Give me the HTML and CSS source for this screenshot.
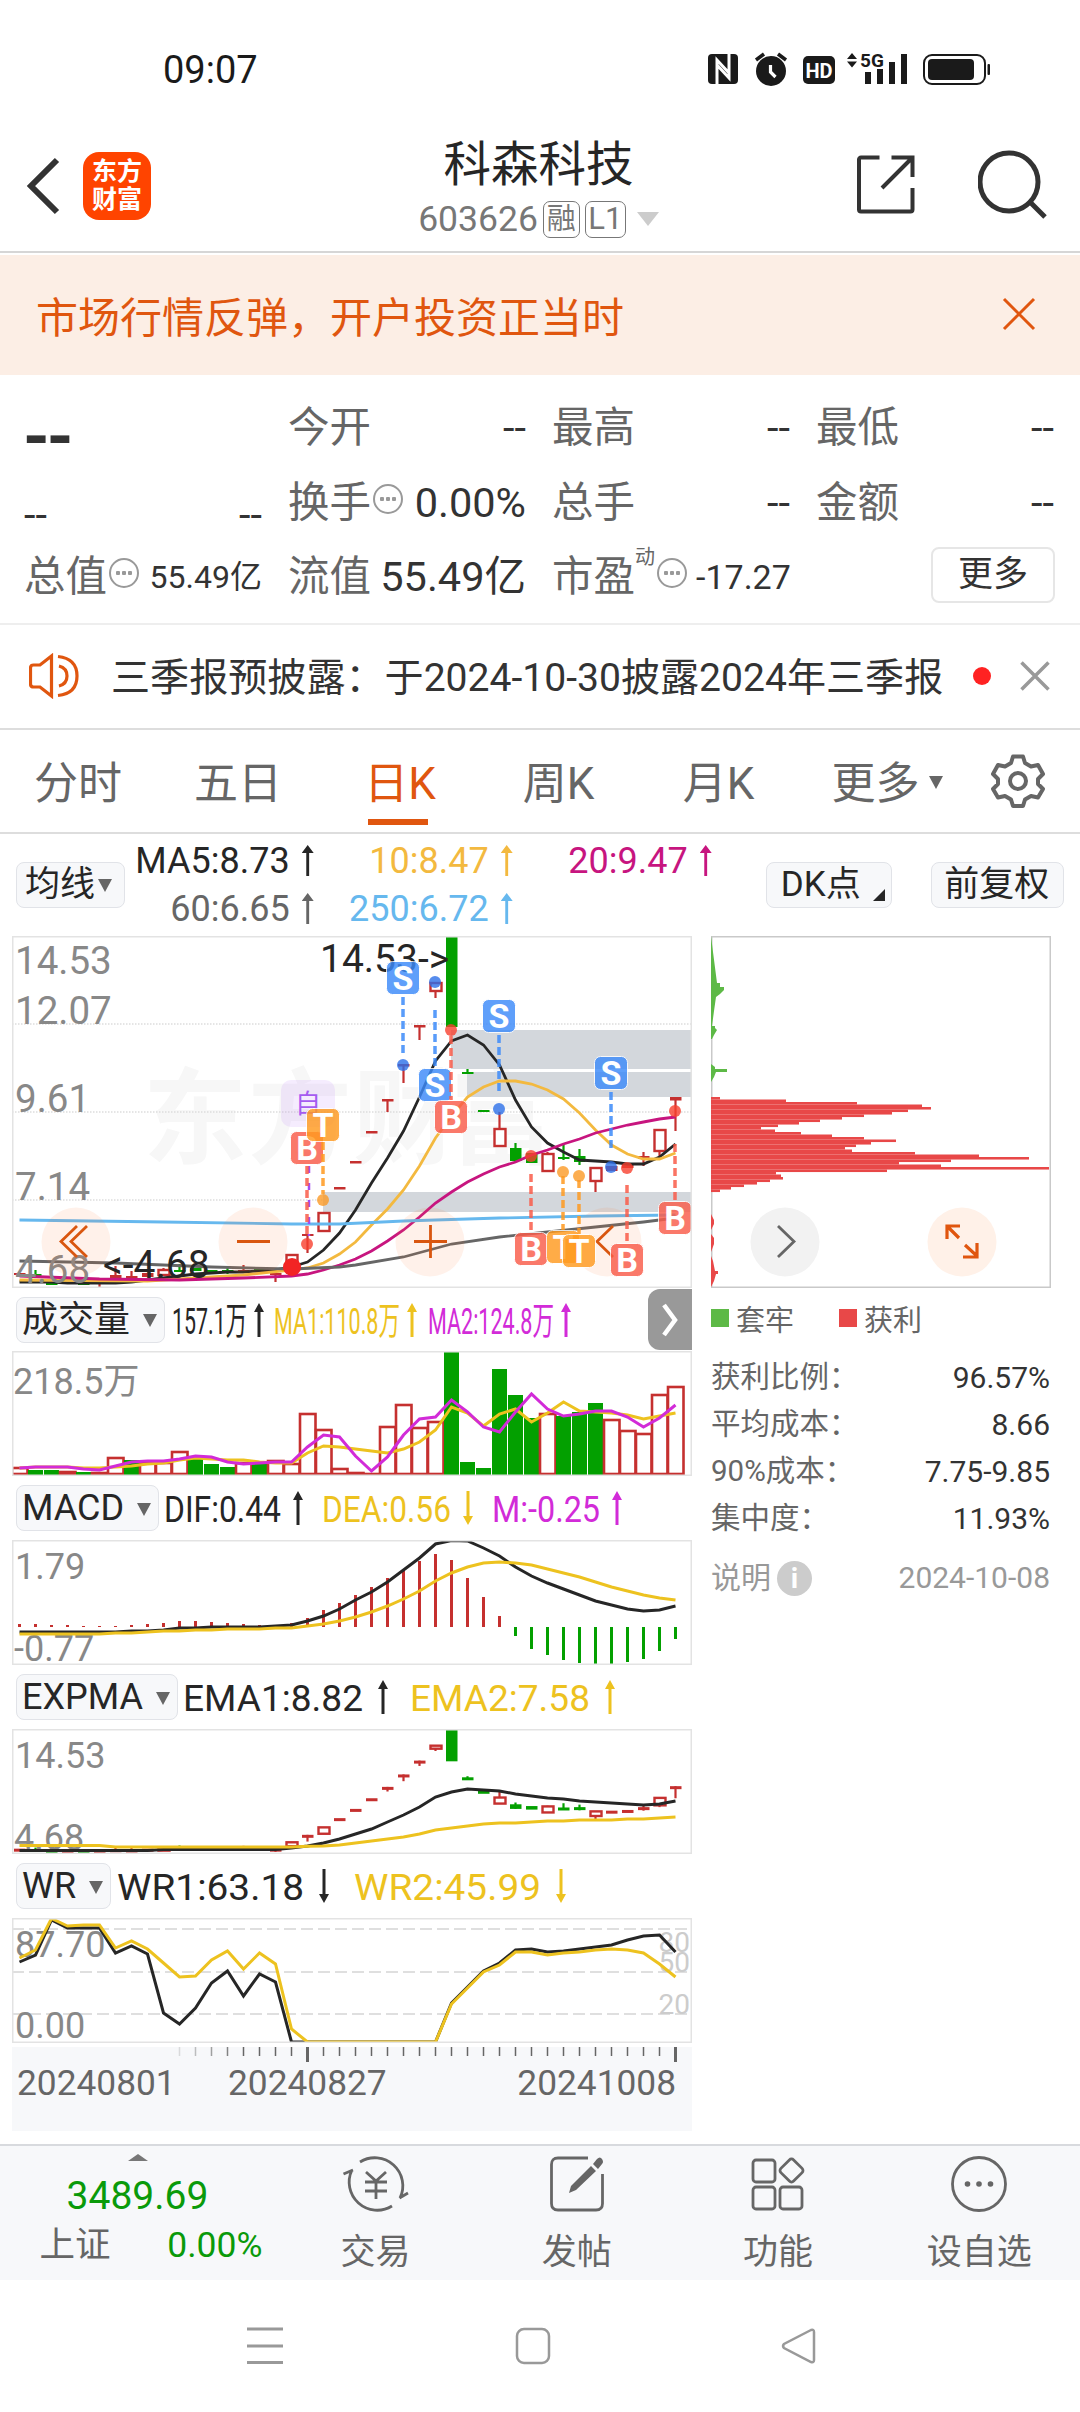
FILE: index.html
```html
<!DOCTYPE html>
<html lang="zh-CN">
<head>
  <meta charset="UTF-8" />
  <meta name="viewport" content="width=device-width, initial-scale=1.0"/>
  <title>科森科技 603626</title>
  <link rel="stylesheet" href="styles.css">
</head>
<body>
  <div class="status-bar">
    <span class="clock">09:07</span>
    <svg class="status-icons" width="286" height="36" viewBox="706 50 286 36">
      <rect x="708" y="54" width="30" height="30" rx="4" fill="#1a1a1a"/>
      <path d="M717 84V60l12 13M729 54v24l-12-13" fill="none" stroke="#fff" stroke-width="3"/>
      <circle cx="771" cy="71" r="15" fill="#1a1a1a"/>
      <path d="M756 60l8-6M786 60l-8-6" stroke="#1a1a1a" stroke-width="3.5"/>
      <path d="M770.5 65v7l5 5" fill="none" stroke="#fff" stroke-width="3.2"/>
      <rect x="803" y="56" width="32" height="28" rx="5" fill="#1a1a1a"/>
      <text x="819" y="77.500" class="hd">HD</text>
      <path d="M847 59l5-6 5 6zM847 61.500l5 6 5-6z" fill="#1a1a1a"/>
      <text x="872" y="67" class="net">5G</text>
      <path d="M865 72h6v12h-6zM877 69h6v15h-6zM889 62h6v22h-6zM901 54h6v30h-6z" fill="#1a1a1a"/>
      <rect x="924" y="55" width="61" height="29" rx="8" fill="none" stroke="#1a1a1a" stroke-width="2"/>
      <rect x="928" y="59" width="46" height="21" rx="4" fill="#1a1a1a"/>
      <rect x="987.500" y="64" width="2.500" height="11" rx="1" fill="#1a1a1a"/>
    </svg>
  </div>

  <header class="header">
    <svg class="back" width="34" height="60" viewBox="0 0 34 60"><path d="M31 4L5 30l26 26" fill="none" stroke="#333" stroke-width="6"/></svg>
    <div class="logo"><span>东方</span><span>财富</span></div>
    <div class="title">
      <h1>科森科技</h1>
      <div class="code">603626<i class="tag">融</i><i class="tag tag-l1">L1</i><b class="caret"></b></div>
    </div>
    <svg class="share" width="60" height="60" viewBox="0 0 60 60"><path d="M24.500 3.500H6a2 2 0 0 0-2 2v50a2 2 0 0 0 2 2h49.500a2 2 0 0 0 2-2V34M36.500 3.500h21V23M57 4L27 34" fill="none" stroke="#333" stroke-width="4"/></svg>
    <svg class="search" width="70" height="70" viewBox="0 0 70 70"><circle cx="31" cy="32" r="29" fill="none" stroke="#333" stroke-width="5"/><path d="M52 52l15 15" stroke="#333" stroke-width="5"/></svg>
  </header>

  <div class="banner">
    <span>市场行情反弹，开户投资正当时</span>
    <svg width="34" height="34" viewBox="0 0 34 34"><path d="M2 2l30 30M32 2L2 32" stroke="#e0560f" stroke-width="3"/></svg>
  </div>

  <div class="quotes">
    <div class="cell"><span class="price">--</span></div>
    <div class="cell"><span>今开</span><b>--</b></div>
    <div class="cell"><span>最高</span><b>--</b></div>
    <div class="cell"><span>最低</span><b>--</b></div>
    <div class="cell change"><b>--</b><b>--</b></div>
    <div class="cell"><span>换手<i class="dots"></i></span><b>0.00%</b></div>
    <div class="cell"><span>总手</span><b>--</b></div>
    <div class="cell"><span>金额</span><b>--</b></div>
    <div class="cell"><span>总值<i class="dots"></i></span><b class="small">55.49亿</b></div>
    <div class="cell"><span>流值</span><b>55.49亿</b></div>
    <div class="cell"><span>市盈<sup>动</sup><i class="dots"></i></span><b class="pe">-17.27</b></div>
    <div class="cell cell-more"><span class="more">更多</span></div>
  </div>

  <div class="news">
    <svg width="50" height="46" viewBox="0 0 50 46"><g fill="none" stroke="#e0560f" stroke-width="3.200"><path d="M22.500 3v40L11 34H4.500q-3 0-3-3V15q0-3 3-3H11z"/><path d="M30 13q8 2 8 10t-8 10M29 3.500q19 2 19 19.500T29 42.500"/></g></svg>
    <span class="news-text">三季报预披露：于2024-10-30披露2024年三季报</span>
    <i class="dot"></i>
    <svg width="30" height="30" viewBox="0 0 30 30"><path d="M1.500 1.500l27 27M28.500 1.500l-27 27" stroke="#999" stroke-width="3.500"/></svg>
  </div>

  <div class="tabs">
    <span>分时</span><span>五日</span><span class="active">日K</span><span>周K</span><span>月K</span><span>更多<b class="caret"></b></span>
    <svg width="54" height="54" viewBox="0 0 54 54"><g fill="none" stroke="#666" stroke-width="4"><path d="M22 2.500h10l2 6.500 6 3.500 7-1.500 5 9-5 5v5l5 5-5 8.500-7-1.500-6 3.500-2 6.500H22l-2-6.500-6-3.500-7 1.500L2 35l5-5v-5l-5-5 5-9 7 1.500L20 9z" stroke-linejoin="round"/><circle cx="27" cy="27" r="8"/></g></svg>
  </div>

  <div class="ma-bar">
    <span class="btn">均线<b class="caret"></b></span>
    <div class="ma-list">
      <span class="c-black">MA5:8.73<i class="arrow"></i></span>
      <span class="c-amber">10:8.47<i class="arrow"></i></span>
      <span class="c-pink">20:9.47<i class="arrow"></i></span>
      <span class="c-gray">60:6.65<i class="arrow"></i></span>
      <span class="c-blue">250:6.72<i class="arrow"></i></span>
    </div>
    <span class="btn dk">DK点<b class="corner"></b></span>
    <span class="btn fq">前复权</span>
  </div>

  <main class="board">
    <div class="charts">
      <svg class="chart" id="price" width="680" height="352"></svg>

      <div class="legend">
        <span class="btn">成交量<b class="caret"></b></span>
        <svg id="volume-legend" height="64" width="520"></svg>
        <span class="expand"><svg width="20" height="40" viewBox="0 0 20 40"><path d="M4 5l11 15L4 35" fill="none" stroke="#fff" stroke-width="4.500"/></svg></span>
      </div>
      <svg class="chart" id="volume" width="680" height="125"></svg>

      <div class="legend">
        <span class="btn">MACD<b class="caret"></b></span>
        <svg id="macd-legend" height="64" width="520"></svg>
      </div>
      <svg class="chart" id="macd" width="680" height="125"></svg>

      <div class="legend">
        <span class="btn">EXPMA<b class="caret"></b></span>
        <svg id="expma-legend" height="64" width="500"></svg>
      </div>
      <svg class="chart" id="expma" width="680" height="125"></svg>

      <div class="legend">
        <span class="btn">WR<b class="caret"></b></span>
        <svg id="wr-legend" height="64" width="520"></svg>
      </div>
      <svg class="chart" id="wr" width="680" height="125"></svg>
      <svg class="axis" id="axis" width="680" height="84"></svg>
    </div>

    <aside class="chips">
      <svg class="chart" id="chips" width="340" height="352"></svg>
      <div class="chips-legend">
        <span><i class="sq green"></i>套牢</span>
        <span><i class="sq red"></i>获利</span>
      </div>
      <dl class="stats">
        <dt>获利比例：</dt><dd>96.57%</dd>
        <dt>平均成本：</dt><dd>8.66</dd>
        <dt>90%成本：</dt><dd>7.75-9.85</dd>
        <dt>集中度：</dt><dd>11.93%</dd>
      </dl>
      <div class="note"><span>说明<i class="info">i</i></span><span>2024-10-08</span></div>
    </aside>
  </main>

  <footer class="toolbar">
    <div class="index">
      <b class="up"></b>
      <span class="index-value">3489.69</span>
      <div class="index-row"><span>上证</span><em>0.00%</em></div>
    </div>
    <div class="tool">
      <svg width="68" height="60" viewBox="0 0 68 60"><g fill="none" stroke="#666" stroke-width="2.800"><path d="M18 8a28 28 0 0 1 40 36M50 52A28 28 0 0 1 10 16M11 16l-9.500 4M57.500 44l8.500-5"/><path d="M24 18l10 9 10-9M34 27v18M23 28h22M23 37h22"/></g></svg>
      <span>交易</span>
    </div>
    <div class="tool">
      <svg width="58" height="60" viewBox="0 0 58 60"><path d="M40 4H10Q3.500 4 3.500 10.500v39Q3.500 56 10 56h38q6.500 0 6.500-6.500V20" fill="none" stroke="#666" stroke-width="2.800"/><path d="M43 12l5 5-20 19-7 3 2-7zM45 10l4-5q3-3 5 0t0 5l-4 5z" fill="#666"/></svg>
      <span>发帖</span>
    </div>
    <div class="tool">
      <svg width="58" height="60" viewBox="0 0 58 60"><g fill="none" stroke="#666" stroke-width="2.800"><rect x="4" y="6" width="22" height="22" rx="3"/><rect x="4" y="33" width="22" height="22" rx="3"/><rect x="31" y="33" width="22" height="22" rx="3"/><rect x="33.500" y="7.500" width="18" height="18" rx="3" transform="rotate(45 42.500 16.500)"/></g></svg>
      <span>功能</span>
    </div>
    <div class="tool">
      <svg width="60" height="60" viewBox="0 0 60 60"><circle cx="30" cy="30" r="26.500" fill="none" stroke="#666" stroke-width="2.800"/><g fill="#666"><circle cx="18.500" cy="30" r="2.800"/><circle cx="30" cy="30" r="2.800"/><circle cx="41.500" cy="30" r="2.800"/></g></svg>
      <span>设自选</span>
    </div>
  </footer>

  <nav class="sys-nav">
    <svg width="36" height="38" viewBox="0 0 36 38"><path d="M0 2h36M0 19h36M0 35.500h36" stroke="#999" stroke-width="3"/></svg>
    <svg width="36" height="38" viewBox="0 0 36 38"><rect x="2" y="2" width="32" height="34" rx="7" fill="none" stroke="#999" stroke-width="2.500"/></svg>
    <svg class="nav-back" width="36" height="38" viewBox="0 0 36 38"><path d="M31 3L4 17q-2 2 0 4l27 14q3 1 3-2V5q0-3-3-2z" fill="none" stroke="#999" stroke-width="2.500"/></svg>
  </nav>
  <script src="script.js"></script>
</body>
</html>
```

FILE: styles.css
```css
* { box-sizing: border-box; }
body {
  margin: 0;
  width: 1080px;
  height: 2412px;
  overflow: hidden;
  background: #fff;
  color: #333;
  font-family: Roboto, "Noto Sans CJK SC", sans-serif;
}
svg { display: block; flex: none; }
i, em { font-style: normal; }
b { font-weight: normal; }
.caret {
  display: inline-block;
  border: 7px solid transparent;
  border-top: 13px solid #666;
  border-bottom: 0;
}

/* status bar */
.status-bar {
  display: flex;
  justify-content: space-between;
  height: 125px;
  padding: 50px 88px 0 163px;
}
.clock { font-size: 38px; line-height: 41px; color: #1a1a1a; }
.hd { font-size: 20px; font-weight: bold; fill: #fff; text-anchor: middle; }
.net { font-size: 19px; font-weight: bold; fill: #1a1a1a; text-anchor: middle; }

/* header */
.header {
  display: flex;
  height: 128px;
  padding: 0 32px 0 26px;
  border-bottom: 2px solid #d6d6d6;
}
.back { margin-top: 31px; }
.logo {
  display: flex;
  flex-direction: column;
  justify-content: center;
  width: 68px;
  height: 68px;
  margin: 27px 0 0 23px;
  border-radius: 16px;
  background: #ff4400;
  color: #fff;
  font-size: 25px;
  line-height: 28px;
  font-weight: bold;
  text-align: center;
}
.title { flex: 1; text-align: center; padding-left: 71px; }
.title h1 {
  margin: 0;
  padding-top: 9px;
  font-size: 47.5px;
  line-height: 62px;
  font-weight: normal;
  color: #262626;
}
.code {
  display: flex;
  align-items: center;
  justify-content: center;
  gap: 5px;
  height: 46px;
  font-size: 35.5px;
  color: #777;
}
.tag {
  width: 37px;
  height: 37px;
  border: 1.5px solid #777;
  border-radius: 7px;
  font-size: 29px;
  line-height: 34px;
}
.tag-l1 { width: 41px; font-size: 31px; }
.code .caret { margin-left: 6px; border-width: 14px 11px 0; border-color: #ccc transparent; }
.share { margin: 29px 0 0; }
.search { margin: 25px 0 0 63px; }

/* banner */
.banner {
  display: flex;
  align-items: center;
  justify-content: space-between;
  height: 120px;
  margin-top: 2px;
  padding: 0 44px 2px 36px;
  background: #fceee5;
  color: #e0560f;
  font-size: 42px;
}

/* quotes */
.quotes {
  display: grid;
  grid-template-columns: repeat(4, 238px);
  grid-auto-rows: 74.5px;
  column-gap: 26px;
  height: 250px;
  padding: 16px 25px 0 24px;
  border-bottom: 2px solid #eee;
}
.cell {
  display: flex;
  align-items: center;
  justify-content: space-between;
  font-size: 41.5px;
  line-height: 60px;
  white-space: nowrap;
}
.cell span { color: #666; }
.cell span.price { font-size: 68px; letter-spacing: -3px; font-weight: bold; color: #333; padding-top: 18px; margin-left: -1px; }
.change { padding-top: 25px; }
.cell .small { font-size: 32px; }
.cell .pe { font-size: 34px; margin-left: 9px; }
.cell:nth-child(11) { justify-content: flex-start; }
.cell sup { display: inline-block; font-size: 20px; line-height: 19px; vertical-align: 27px; }
.dots {
  display: inline-block;
  width: 30px;
  height: 30px;
  margin-left: 2px;
  border: 2px solid #999;
  border-radius: 50%;
  vertical-align: 3px;
  background: radial-gradient(circle, #999 2px, transparent 2.5px) center / 8px 8px no-repeat,
    radial-gradient(circle, #999 2px, transparent 2.5px) 3px center / 8px 8px no-repeat,
    radial-gradient(circle, #999 2px, transparent 2.5px) 15px center / 8px 8px no-repeat;
}
.cell-more { justify-content: flex-end; }
.cell .more {
  width: 124px;
  height: 56px;
  margin: 0 -1px 4px 0;
  border: 2px solid #e6e6e6;
  border-radius: 8px;
  color: #333;
  font-size: 35px;
  line-height: 52px;
  text-align: center;
}

/* news line */
.news {
  display: flex;
  align-items: center;
  height: 105px;
  padding: 0 30px 2px 29px;
  border-bottom: 2px solid #ddd;
}
.news-text { flex: 1; margin: 0 0 3px 32px; font-size: 39.1px; white-space: nowrap; }
.dot { width: 18px; height: 18px; margin-right: 29px; border-radius: 50%; background: #f22; }

/* period tabs */
.tabs {
  display: flex;
  height: 104px;
  border-bottom: 2px solid #ddd;
  font-size: 44px;
  line-height: 109px;
  color: #666;
}
.tabs span { width: 160px; text-align: center; white-space: nowrap; }
.tabs span:nth-child(-n+2) { padding-right: 4px; }
.tabs span:nth-child(n+4) { padding-right: 3px; }
.tabs span:nth-child(6) { width: 177px; }
.tabs .caret { margin-left: 9px; vertical-align: 10px; }
.tabs svg { margin: 24px 0 0 14px; }
.tabs .active {
  color: #e0560f;
  background: linear-gradient(#e0560f, #e0560f) 48px 89px / 60px 6px no-repeat;
}

/* moving averages */
.btn {
  display: inline-flex;
  align-items: center;
  height: 46px;
  padding: 0 5px;
  border: 1.5px solid #e1e3e8;
  border-radius: 8px;
  background: #f7f8fa;
  color: #262626;
  font-size: 35px;
  line-height: 44px;
  white-space: nowrap;
}
.ma-bar {
  display: flex;
  align-items: center;
  height: 102px;
  padding: 0 16px;
  white-space: nowrap;
}
.ma-bar > .btn:first-child { width: 109px; padding-left: 8px; }
.ma-bar > .btn:first-child .caret { margin-left: 3px; }
.ma-list {
  display: grid;
  grid-template-columns: 190px 199px 199px;
  grid-auto-rows: 48px;
  line-height: 48px;
  font-size: 36px;
  text-align: right;
}
.arrow {
  display: inline-block;
  width: 12px;
  height: 31px;
  margin: 0 1px 0 12px;
  vertical-align: -3px;
  background: currentColor;
  clip-path: polygon(50% 0, 100% 8px, 62% 8px, 62% 100%, 38% 100%, 38% 8px, 0 8px);
}
.btn.dk { width: 127px; margin-left: 53px; padding-left: 14px; }
.btn.fq { width: 133px; margin-left: 39px; padding-left: 12px; }
.corner {
  margin: 20px 0 0 12px;
  border-left: 12px solid transparent;
  border-bottom: 12px solid #262626;
}
.c-black { color: #262626; }
.c-amber { color: #f3b93f; }
.c-pink { color: #c7157f; }
.c-gray { color: #666; }
.c-blue { color: #66b8ee; }

/* charts */
.board { display: flex; height: 1208px; padding-left: 12px; }
.charts { width: 680px; }
.chart text, .axis text, .legend text { font-family: Roboto, "Noto Sans CJK SC", sans-serif; }
.scale { fill: #888; font-size: 36px; }
.price-scale { fill: #888; font-size: 38.5px; }
.extreme { fill: #262626; font-size: 39px; }
.watermark { fill: #f7f7f7; font-size: 104px; font-weight: bold; }
.mark { fill: #fff; font-size: 34px; font-weight: bold; text-anchor: middle; }
.level { fill: #ccc; font-size: 28px; text-anchor: end; }
.date { fill: #666; font-size: 35.3px; }
.legend { display: flex; align-items: center; height: 64px; padding-left: 4px; position: relative; }
#price + .legend { height: 63px; }
.legend .btn { font-size: 36px; }
.legend .caret { margin: 2px 2px 0 13px; }
.legend > svg { position: absolute; left: 0; top: 0; width: 680px; }
.expand {
  display: flex;
  align-items: center;
  justify-content: center;
  width: 44px;
  height: 61px;
  margin-left: auto;
  border-radius: 12px 0 0 12px;
  background: #999;
}
.axis { margin-top: 4px; background: #f7f8fa; }

/* chip distribution */
.chips { width: 339px; margin-left: 19px; }
.chips-legend {
  display: flex;
  height: 62px;
  align-items: center;
  padding-bottom: 3px;
  font-size: 29px;
  color: #666;
}
.chips-legend span { display: flex; align-items: center; width: 128px; }
.sq { width: 18px; height: 18px; margin-right: 7px; }
.green { background: #5db946; }
.red { background: #e84848; }
.stats {
  display: grid;
  grid-template-columns: auto auto;
  grid-auto-rows: 47px;
  margin: 4px 0 0;
  line-height: 47px;
  font-size: 29.5px;
  color: #666;
}
.stats dd { margin: 0; text-align: right; color: #333; font-size: 30px; }
.note {
  display: flex;
  justify-content: space-between;
  margin-top: 13px;
  line-height: 46px;
  font-size: 30px;
  color: #999;
}
.info {
  display: inline-block;
  width: 35px;
  height: 35px;
  margin-left: 6px;
  border-radius: 50%;
  background: #ccc;
  color: #fff;
  font-size: 28px;
  font-weight: bold;
  line-height: 35px;
  text-align: center;
}

/* bottom toolbar */
.toolbar {
  display: flex;
  height: 136px;
  border-top: 2px solid #d8dade;
  background: #f7f8fa;
}
.index { display: flex; flex-direction: column; align-items: center; width: 275px; color: #0a9a0a; }
.up { margin-top: 8px; border: 10px solid transparent; border-bottom: 7px solid #777; border-top: 0; }
.index-value { margin-top: 9px; font-size: 39px; line-height: 52px; }
.index-row { display: flex; justify-content: space-between; width: 223px; margin-left: 27px; font-size: 35.5px; line-height: 46px; }
.index-row span { color: #666; }
.tool {
  display: flex;
  flex: 1;
  flex-direction: column;
  align-items: center;
  padding-top: 8px;
  color: #666;
  font-size: 35px;
}
.tool span { margin-top: 14px; line-height: 50px; }

.sys-nav { display: flex; gap: 232px; height: 132px; padding: 47px 0 0 247px; }
.nav-back { margin-left: -3px; }
```

FILE: script.js
```js
const RED = '#c5302f', GREEN = '#03a000', BLACK = '#262626', YELLOW = '#edc21f', PURPLE = '#d22bd8';
const W = 680;
const x = i => 7.5 + i * 16;
const fill = (n, v) => Array(n).fill(v);

function draw(id, markup) {
  document.getElementById(id).innerHTML = markup;
}

function line(ys, color, width = 3) {
  return `<polyline points="${ys.map((y, i) => x(i) + ',' + y).join(' ')}" fill="none" stroke="${color}" stroke-width="${width}"/>`;
}

// line given as sparse [index, y] pairs
function sparse(points, color) {
  return `<polyline points="${points.map(p => x(p[0]) + ',' + p[1]).join(' ')}" fill="none" stroke="${color}" stroke-width="2.8"/>`;
}

function frame(h, color = '#e3e3e3') {
  return `<rect x=".75" y=".75" width="${W - 1.5}" height="${h - 1.5}" fill="none" stroke="${color}" stroke-width="1.5"/>`;
}

function text(cls, tx, ty, s, extra = '') {
  return `<text class="${cls}" x="${tx}" y="${ty}" ${extra}>${s}</text>`;
}

// [index, kind, bodyTop, bodyBottom, wickTop, wickBottom]; h = hollow red, r = solid red, g = green
const candles = [
  [0, 'r', 337, 339], [1, 'g', 338, 340, 334, 340], [2, 'g', 345, 349], [3, 'r', 346, 348], [4, 'g', 346, 349],
  [5, 'r', 346, 348, 346, 351], [6, 'r', 339, 342, 330, 342], [7, 'r', 340, 342, 335, 342], [8, 'r', 337, 341],
  [9, 'h', 334, 339, 332, 339], [10, 'g', 334, 336, 328, 336], [11, 'g', 332, 335], [12, 'g', 334, 337],
  [13, 'g', 334, 336, 332, 338], [14, 'r', 334, 337, 329, 337], [15, 'g', 331, 335], [16, 'r', 337, 339, 337, 346],
  [17, 'h', 319, 330], [18, 'r', 298, 300, 298, 317], [19, 'h', 277, 295], [20, 'r', 251, 253.5], [21, 'r', 225, 227.5],
  [22, 'r', 195, 197.500], [23, 'r', 163, 165.500, 163, 176], [24, 'r', 128, 130.500, 128, 147], [25, 'r', 89, 91.500, 89, 104],
  [26, 'h', 47, 55, 47, 62], [27, 'g', 0, 91], [28, 'g', 136, 138, 133, 138], [29, 'g', 174, 176],
  [30, 'h', 193, 210, 176, 193], [31, 'g', 212, 225, 207, 225], [32, 'g', 217, 227], [33, 'h', 218, 235, 216, 218],
  [34, 'g', 221, 223, 209, 224], [35, 'g', 220, 226, 213, 229], [36, 'h', 232, 245, 245, 256], [37, 'r', 230, 235],
  [38, 'r', 228, 232], [39, 'r', 220, 223, 216, 230], [40, 'h', 194, 215, 215, 220], [41, 'r', 161, 164.500, 161, 195],
];

function drawCandles(k) {
  return candles.map(([i, kind, top, bottom, wt, wb]) => {
    const color = kind === 'g' ? GREEN : RED;
    const h = Math.max((bottom - top) * k, k < 1 ? 3 : 2);
    let s = wb ? `<path d="M${x(i)} ${wt * k}V${wb * k}" stroke="${color}" stroke-width="2.200"/>` : '';
    s += kind === 'h'
      ? `<rect x="${x(i) - 5}" y="${top * k}" width="11" height="${h}" fill="#fff" stroke="${color}" stroke-width="2.400"/>`
      : `<rect x="${x(i) - 5.500}" y="${top * k}" width="11.500" height="${h}" fill="${color}"/>`;
    return s;
  }).join('');
}

// buy / sell / T marks: [letter, x, labelY, dotY, dashFrom, dashTo]
const markColor = { S: '#3d8bfa', B: '#fa5c4a', T: '#ff9a1f' };
const dotColor = { S: '#2c6fe8', B: '#f7402e', T: '#fb9a25' };
const marks = [
  ['S', 391, 42, 129, 61, 118], ['S', 423, 149, 46, 74, 131], ['B', 439, 181, 94, 100, 164], ['S', 487, 80, 173, 99, 156],
  ['B', 519, 313, 220, 238, 296], ['T', 551, 311, 236, 240, 294], ['T', 567, 315, 240, 244, 298], ['S', 599, 137, 231, 156, 213],
  ['B', 615, 324, 232, 249, 308], ['B', 663, 282, 175, 208, 265], ['B', 295, 212, 308, 230, 300], ['T', 311, 189, 264, 206, 258],
];

function drawMark([c, mx, ly, dy, a, b]) {
  return `<path d="M${mx} ${a}V${b}" stroke="${markColor[c]}" stroke-width="3.500" stroke-dasharray="8 4" opacity=".85"/>
    <circle cx="${mx}" cy="${dy}" r="6" fill="${dotColor[c]}" opacity=".8"/>
    <rect x="${mx - 16.500}" y="${ly - 16.500}" width="33" height="33" rx="6" fill="${markColor[c]}" stroke="#fff" opacity=".82"/>
    ${text('mark', mx, ly + 12, c)}`;
}

function roundButton(cx, path) {
  return `<circle cx="${cx}" cy="306" r="34.500" fill="#ff7a30" opacity=".1"/><path d="${path}" fill="none" stroke="#d9560f" stroke-width="2.800"/>`;
}

draw('price',
  [['东', 131], ['方', 236], ['财', 341], ['富', 438]].map(c => text('watermark', c[1], 220, c[0])).join('') +
  `<path d="M0 88H680M0 176H680M0 264H680" stroke="#ddd" stroke-width="1.500" stroke-dasharray="1.500 1.500"/>
   <path d="M439 94H680V133H439zM455 136H680V161H455zM311 256H680V276H311z" fill="#d3d7dc"/>` +
  drawCandles(1) +
  line([346, 346, 346, 347, 347, 347, 347, 346, 344, 342, 340, 338, 337, 336, 336, 335, 334, 331, 326, 314, 297, 274, 247, 222, 195, 161, 125, 105, 99, 109, 129, 164, 191, 207, 216, 224, 225, 226, 228, 228, 221, 208], BLACK, 2.8) +
  sparse([[0, 344], [8, 345], [11, 342], [14, 339], [17, 334], [18, 332], [19, 327], [20, 318], [21, 306], [22, 289], [23, 273], [24, 254], [25, 230], [26, 202], [27, 180], [28, 161], [29, 151], [30, 145], [31, 145], [32, 148], [33, 154], [34, 163], [35, 177], [36, 194], [37, 209], [38, 218], [39, 223], [40, 223], [41, 217]], '#f3b93f') +
  sparse([[0, 340], [5, 343], [10, 344], [14, 342], [17, 340], [18, 338], [19, 334], [20, 329], [21, 323], [22, 315], [23, 305], [24, 294], [25, 281], [26, 267], [27, 256], [28, 246], [29, 238], [30, 231], [31, 226], [32, 219], [33, 214], [34, 208], [35, 203], [36, 197], [37, 193], [38, 189], [39, 186], [40, 183], [41, 181]], '#c7157f') +
  sparse([[0, 325], [6, 327], [12, 331], [17, 333], [20, 331], [21, 329], [24, 321], [27, 308], [30, 301], [33, 296], [36, 291], [39, 286], [41, 282]], '#666') +
  sparse([[0, 284], [9, 286], [17, 288], [20, 288], [24, 285], [30, 282], [36, 280], [41, 279]], '#66b8ee') +
  [[38, '14.53'], [88, '12.07'], [176, '9.61'], [264, '7.14'], [347, '4.68']].map(l => text('price-scale', 3, l[0], l[1])).join('') +
  text('extreme', 308, 36, '14.53-&gt;') + text('extreme', 91, 342, '&lt;-4.68') +
  roundButton(64, 'M65 290L49 305.500L65 321M75 290L59 305.500L75 321') +
  roundButton(241, 'M225 305.500H258') +
  roundButton(418, 'M402 305.500H435M418.500 289V322') +
  roundButton(595, 'M601 290L585 305.500L601 321') +
  `<rect x="269" y="144" width="54" height="47" rx="10" fill="#b26bf5" opacity=".13"/>
   <text x="296" y="177" font-size="26" text-anchor="middle" fill="#a55cf0">自</text>
   <path d="M297 230V300" stroke="#a44df0" stroke-width="2.500" stroke-dasharray="7 10"/>` +
  marks.map(drawMark).join('') +
  `<circle cx="280" cy="331" r="9" fill="#f22424"/>` + frame(352));

// volume
const vol = [8, 5, 5, 4, 3, 3, 18, 15, 13, 13, 24, 16, 11, 8, 13, 12, 15, 12, 62, 46, 7, 3, 2, 49, 71, 48, 54, 124, 13, 7, 106, 80, 57, 62, 59, 63, 72, 56, 45, 42, 81, 89];
const down = [1, 2, 4, 7, 11, 12, 13, 15, 27, 28, 29, 30, 31, 32, 34, 35, 36];
draw('volume',
  text('scale', 1, 43, '218.5万') +
  vol.map((v, i) => down.includes(i)
    ? `<rect x="${x(i) - 7.500}" y="${124 - v}" width="15" height="${v}" fill="${GREEN}"/>`
    : `<rect x="${x(i) - 7.500}" y="${125 - v}" width="15.500" height="${Math.max(v - 2, 1)}" fill="#fff" stroke="${RED}" stroke-width="2.600"/>`).join('') +
  line([117, 116, 116, 116, 117, 117, 116, 115, 113, 112, 109, 107, 108, 109, 109, 111, 112, 112, 102, 95, 96, 98, 100, 102, 98, 91, 79, 56, 62, 75, 63, 58, 71, 62, 51, 60, 61, 62, 64, 68, 65, 62], YELLOW) +
  line([117, 116, 116, 116, 118, 119, 115, 111, 110, 110, 108, 105, 106, 111, 113, 112, 111, 111, 96, 84, 86, 105, 120, 106, 84, 68, 66, 49, 61, 76, 81, 61, 43, 58, 65, 63, 60, 60, 66, 76, 67, 54], PURPLE) +
  frame(125));

// MACD
const hist = [3, 3, 2, 2, 1, 1, 1, 2, 3, 4, 6, 6, 5, 4, 3, 2, 1, 4, 9, 17, 24, 32, 40, 49, 57, 66, 73, 67, 49, 30, 11, -9, -22, -28, -33, -36, -38, -37, -35, -32, -24, -12];
draw('macd',
  text('scale', 3, 39, '1.79') + text('scale', 2, 121, '-0.77') +
  hist.map((v, i) => `<path d="M${x(i)} 87V${87 - v}" stroke="${v > 0 ? RED : GREEN}" stroke-width="3"/>`).join('') +
  line([...fill(6, 92), 92, 91, 91, 90, 88, 88, 87, 87, 87, 87, 86, 85, 81, 76, 69, 60, 52, 42, 30, 18, 4, .5, 1, 8, 16, 27, 36, 43, 49, 55, 61, 65, 69, 71, 70, 66], BLACK) +
  line([...fill(6, 94), 93, 93, 92, 91, 91, 90, 90, 89, 89, 89, 88, 88, 86, 84, 81, 77, 72, 66, 59, 51, 41, 33, 27, 23, 22, 23, 25, 29, 33, 37, 42, 47, 51, 55, 58, 60], YELLOW) +
  frame(125));

// EXPMA
draw('expma',
  text('scale', 3, 39, '14.53') + text('scale', 2, 121, '4.68') +
  drawCandles(125 / 352) +
  line([...fill(9, 121.5), ...fill(8, 120.5), 119, 117, 114, 110, 105, 100, 93, 86, 78, 68, 63, 60, 61, 62, 65, 67, 69, 70, 72, 73, 74, 75, 76, 75, 72], BLACK) +
  line([...fill(6, 116.5), ...fill(12, 118), 117.300, 117, 116, 114, 112, 110, 108, 105, 101, 99, 97, 95, 94, 94, 93, 92, 92, 91, 91, 91, 90, 90, 89, 88], YELLOW) +
  frame(125));

// WR
draw('wr',
  `<path d="M0 11H680M0 54H680M0 96H680" stroke="#d5d5d5" stroke-width="1.500" stroke-dasharray="12 5"/>` +
  text('scale', 3, 39, '87.70') + text('scale', 3, 120, '0.00') +
  text('level', 678, 34, '80') + text('level', 678, 54, '50') + text('level', 678, 96, '20') +
  line([44, 37, 2, 10, 10, 10, 35, 28, 36, 95, 106, 90, 65, 53, 78, 56, 64, ...fill(10, 124), 85, 69, 53, 45, 32, 31, 34, 33, 31, 29, 27, 22, 18, 17, 34], BLACK) +
  line([40, 32, .5, 8, 7, 7, 30, 23, 31, 45, 59, 58, 42, 33, 51, 35, 46, 111, ...fill(9, 124), 86, 70, 54, 47, 34, 34, 37, 35, 34, 32, 31, 32, 35, 46, 59], YELLOW) +
  frame(125));

// time axis, ticks fade in from the left
let ticks = '';
for (let i = 10; i < 42; i++) {
  const major = i === 18 || i === 41;
  ticks += `<path d="M${x(i)} 0V${major ? 15 : 9}" stroke="#666" stroke-width="${major ? 3 : 1.5}" opacity="${Math.min(1, (i - 9) / 5)}"/>`;
}
draw('axis', ticks + text('date', 5, 48, '20240801') + text('date', 216, 48, '20240827') + text('date', 664, 48, '20241008', 'text-anchor="end"'));

// legends: [text, x, width, color, arrow direction]
function legend(id, items) {
  draw(id, items.map(([s, lx, w, color, dir]) => {
    const ax = lx + w + (id === 'volume-legend' ? 12 : id === 'macd-legend' ? 17 : 20);
    const arrow = dir > 0
      ? `M${ax} 15l5 9h-3.500v25h-3v-25h-3.500z`
      : `M${ax} 49l5-9h-3.500v-25h-3v25h-3.500z`;
    return `<text x="${lx}" y="45.500" font-size="37.500" fill="${color}" textLength="${w}" lengthAdjust="spacingAndGlyphs">${s}</text><path d="${arrow}" fill="${color}"/>`;
  }).join(''));
}
legend('volume-legend', [['157.1万', 160, 75, BLACK, 1], ['MA1:110.8万', 262, 126, YELLOW, 1], ['MA2:124.8万', 416, 126, PURPLE, 1]]);
legend('macd-legend', [['DIF:0.44', 152, 117, BLACK, 1], ['DEA:0.56', 310, 129, YELLOW, -1], ['M:-0.25', 480, 108, PURPLE, 1]]);
legend('expma-legend', [['EMA1:8.82', 171, 180, BLACK, 1], ['EMA2:7.58', 398, 180, YELLOW, 1]]);
legend('wr-legend', [['WR1:63.18', 105, 187, BLACK, -1], ['WR2:45.99', 342, 187, YELLOW, -1]]);

// chip distribution
const chipRows = [9, 75, 146, 211, 220, 197, 181, 153, 131, 109, 88, 67, 50, 64, 90, 121, 153, 185, 160, 145, 134, 141, 204, 268, 318, 240, 188, 230, 338, 176, 65, 70, 72, 59, 46, 33, 20, 9];
draw('chips',
  `<rect x=".75" y=".75" width="338.500" height="350.500" fill="none" stroke="#c9c9c9" stroke-width="1.500"/>
   <path d="M0 0L2 16L6 47H9V51H13V54L9 58L5 61L3 75L1 90H4V92L6 94L3 99L1 103H0zM0 128L4 131V133H16V136H5L3 141L0 146z" fill="#5db946"/>` +
  chipRows.map((w, i) => `<rect x="0" y="${161 + i * 2.5}" width="${w}" height="2.550" fill="#e84848"/>`).join('') +
  `<path d="M0 278L3 284V288L0 294zM0 298L3 302V308L0 316zM0 320L2 325L4 335H7V338H5L3 345L0 351z" fill="#e84848"/>
   <circle cx="74" cy="306" r="34.500" fill="#f2f2f2"/><path d="M67 290L83 305.500L67 321" fill="none" stroke="#666" stroke-width="2.800"/>
   <circle cx="251" cy="306" r="34.500" fill="#fff1e8"/>
   <path d="M249 290H236V303M236 290L248 302M254 309L266 320M266 307V321H252" fill="none" stroke="#e0560f" stroke-width="3.200"/>`);
```
